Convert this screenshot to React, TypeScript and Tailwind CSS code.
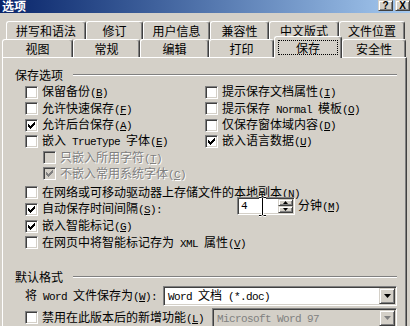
import React from 'react';

const mono = "font-['Liberation_Mono','Noto_Sans_CJK_SC',monospace] text-[11px] tracking-[-0.6px]";
const sunken =
  'border border-t-[#808080] border-l-[#808080] border-r-white border-b-white shadow-[inset_1px_1px_0_#404040,inset_-1px_-1px_0_#d4d0c8]';
const raised =
  'bg-[#d4d0c8] border border-t-[#d4d0c8] border-l-[#d4d0c8] border-r-[#404040] border-b-[#404040] shadow-[inset_1px_1px_0_#fff,inset_-1px_-1px_0_#808080]';

function M({ children }: { children: React.ReactNode }) {
  return <span className={mono}>{children}</span>;
}

// mnemonic like (B)
function Key({ k, tail = '' }: { k: string; tail?: string }) {
  return (
    <span className={mono}>
      (<span className="underline">{k}</span>){tail}
    </span>
  );
}

// classic 7x7 check glyph
const checkPixels: [number, number, number][] = [
  [6, 0, 1],
  [5, 1, 2],
  [0, 2, 1],
  [4, 2, 3],
  [0, 3, 2],
  [3, 3, 3],
  [0, 4, 5],
  [1, 5, 3],
  [2, 6, 1],
];

function Check({ on, disabled }: { on?: boolean; disabled?: boolean }) {
  return (
    <span className={`relative block w-[13px] h-[13px] shrink-0 ${sunken} ${disabled ? 'bg-[#d4d0c8]' : 'bg-white'}`}>
      {on && (
        <svg className="absolute left-[2px] top-[2px]" width="7" height="7" viewBox="0 0 7 7">
          {checkPixels.map(([x, y, w], i) => (
            <rect key={i} x={x} y={y} width={w} height={1} fill={disabled ? '#808080' : '#000'} />
          ))}
        </svg>
      )}
    </span>
  );
}

function Opt({
  on,
  disabled,
  children,
  className = '',
}: {
  on?: boolean;
  disabled?: boolean;
  children: React.ReactNode;
  className?: string;
}) {
  return (
    <div className={`flex items-center gap-[4px] ${className}`}>
      <Check on={on} disabled={disabled} />
      <span className={`whitespace-nowrap leading-none ${disabled ? 'text-[#808080] [text-shadow:1px_1px_0_#fff]' : ''}`}>
        {children}
      </span>
    </div>
  );
}

function Arrow({ disabled }: { disabled?: boolean }) {
  return (
    <div className={`w-[16px] h-[16px] shrink-0 flex items-center justify-center ${raised}`}>
      <svg width="7" height="4" viewBox="0 0 7 4">
        <path d="M0 0h7L3.5 4z" fill={disabled ? '#808080' : '#000'} />
      </svg>
    </div>
  );
}

function Select({ className, disabled, children }: { className: string; disabled?: boolean; children: React.ReactNode }) {
  return (
    <div
      className={`flex items-center h-[20px] p-[1px] pl-[4px] ${sunken} ${className} ${
        disabled ? 'bg-[#d4d0c8] text-[#808080]' : 'bg-white'
      }`}
    >
      <span className="flex-1 whitespace-nowrap leading-none">{children}</span>
      <Arrow disabled={disabled} />
    </div>
  );
}

const row1 = [
  { label: '拼写和语法', w: 'w-[80px]' },
  { label: '修订', w: 'w-[57px]' },
  { label: '用户信息', w: 'w-[67px]' },
  { label: '兼容性', w: 'w-[59px]' },
  { label: '中文版式', w: 'w-[70px]' },
  { label: '文件位置', w: 'w-[66px]' },
];

const row2 = [
  { label: '视图', w: 'w-[71px]' },
  { label: '常规', w: 'w-[67px]' },
  { label: '编辑', w: 'w-[69px]' },
  { label: '打印', w: 'w-[65px]' },
  { label: '保存', w: 'w-[68px]', active: true },
  { label: '安全性', w: 'w-[64px]' },
];

const tabBase =
  'flex items-center justify-center shrink-0 border-l border-t border-white border-r border-r-[#404040] rounded-t-[3px] shadow-[inset_-1px_0_0_#808080] bg-[#d4d0c8]';

export default function App() {
  return (
    <div className="w-[410px] h-[326px] overflow-hidden bg-[#d4d0c8] flex flex-col text-[12px] text-black font-['Noto_Sans_CJK_SC',sans-serif]">
      {/* title bar */}
      <div className="h-[13px] shrink-0 flex items-start bg-gradient-to-r from-[#0a246a] to-[#a6caf0]">
        <span className="ml-[2px] text-white font-bold leading-[12px]">选项</span>
        <div className="ml-auto flex gap-[2px]">
          <div className={`w-[15px] h-[11px] flex items-center justify-center font-bold text-[10px] leading-none ${raised}`}>
            <span className="font-['Liberation_Sans',sans-serif]">?</span>
          </div>
          <div className={`w-[15px] h-[11px] flex items-center justify-center font-bold text-[10px] leading-none ${raised}`}>
            <span className="font-['Liberation_Sans',sans-serif]">X</span>
          </div>
        </div>
      </div>

      {/* tabs */}
      <div className="mt-[8px] h-[18px] shrink-0 flex pl-[6px]">
        {row1.map((t) => (
          <div key={t.label} className={`${tabBase} ${t.w} h-[18px]`}>
            <span className="leading-none">{t.label}</span>
          </div>
        ))}
      </div>
      <div className="h-[18px] shrink-0 flex items-start pl-[2px]">
        {row2.map((t) =>
          t.active ? (
            <div key={t.label} className={`${tabBase} ${t.w} relative z-10 -mt-[3px] h-[22px] items-stretch`}>
              <div className="flex-1 m-[3px] mt-[3px] flex items-center justify-center border border-dotted border-black">
                <span className="leading-none">{t.label}</span>
              </div>
            </div>
          ) : (
            <div key={t.label} className={`${tabBase} ${t.w} h-[18px]`}>
              <span className="leading-none">{t.label}</span>
            </div>
          )
        )}
      </div>

      {/* panel */}
      <div className="ml-[2px] w-[405px] flex-1 border-l border-t border-white border-r border-r-[#404040] shadow-[inset_-1px_0_0_#808080] pl-[12px] pr-[9px] flex flex-col">
        <div className="mt-[9px] h-[16px] shrink-0 flex items-center gap-[10px]">
          <span className="leading-none">保存选项</span>
          <div className="flex-1 h-[2px] border-t border-t-[#808080] border-b border-b-white" />
        </div>

        <div className="ml-[10px] mt-[1.3px] flex flex-col">
          <div className="h-[16.3px] flex items-center">
            <Opt className="w-[180px]">
              保留备份<Key k="B" />
            </Opt>
            <Opt>
              提示保存文档属性<Key k="I" />
            </Opt>
          </div>
          <div className="h-[16.3px] flex items-center">
            <Opt className="w-[180px]">
              允许快速保存<Key k="F" />
            </Opt>
            <Opt>
              提示保存<M> Normal </M>模板<Key k="O" />
            </Opt>
          </div>
          <div className="h-[16.3px] flex items-center">
            <Opt on className="w-[180px]">
              允许后台保存<Key k="A" />
            </Opt>
            <Opt>
              仅保存窗体域内容<Key k="D" />
            </Opt>
          </div>
          <div className="h-[16.3px] flex items-center">
            <Opt className="w-[180px]">
              嵌入<M> TrueType </M>字体<Key k="E" />
            </Opt>
            <Opt on>
              嵌入语言数据<Key k="U" />
            </Opt>
          </div>
          <div className="h-[16.3px] flex items-center pl-[18px]">
            <Opt disabled>
              只嵌入所用字符<Key k="T" />
            </Opt>
          </div>
          <div className="h-[16.3px] flex items-center pl-[18px]">
            <Opt on disabled>
              不嵌入常用系统字体<Key k="C" />
            </Opt>
          </div>

          <div className="mt-[2.3px] h-[16.7px] flex items-center">
            <Opt>
              在网络或可移动驱动器上存储文件的本地副本<Key k="N" />
            </Opt>
          </div>
          <div className="h-[16.7px] flex items-center">
            <Check on />
            <span className="ml-[4px] w-[195px] shrink-0 whitespace-nowrap leading-none">
              自动保存时间间隔<Key k="S" tail=":" />
            </span>
            <div className="mb-[6px] flex items-center">
              <div className={`relative flex w-[58px] h-[18px] p-[1px] bg-white ${sunken}`}>
                <span className="flex-1 flex items-center pl-[2px] leading-none">
                  <M>4</M>
                </span>
                <div className="w-[15px] flex flex-col">
                  <div className={`h-[7px] flex items-center justify-center ${raised}`}>
                    <svg width="5" height="3" viewBox="0 0 5 3">
                      <path d="M2.5 0L5 3H0z" fill="#000" />
                    </svg>
                  </div>
                  <div className={`h-[7px] flex items-center justify-center ${raised}`}>
                    <svg width="5" height="3" viewBox="0 0 5 3">
                      <path d="M0 0h5L2.5 3z" fill="#000" />
                    </svg>
                  </div>
                </div>
                {/* I-beam mouse cursor */}
                <svg className="absolute left-[20px] -top-[2px]" width="9" height="21" viewBox="0 0 9 21">
                  <path d="M1 1.5h2.5M5.5 1.5h2.5M4.5 2v17M1 19.5h2.5M5.5 19.5h2.5" stroke="#fff" strokeWidth="3" fill="none" />
                  <path d="M1 1.5h2.5M5.5 1.5h2.5M4.5 2v17M1 19.5h2.5M5.5 19.5h2.5" stroke="#000" strokeWidth="1" fill="none" />
                </svg>
              </div>
              <span className="ml-[3px] whitespace-nowrap leading-none">
                分钟<Key k="M" />
              </span>
            </div>
          </div>
          <div className="h-[16.7px] flex items-center">
            <Opt on>
              嵌入智能标记<Key k="G" />
            </Opt>
          </div>
          <div className="h-[16.7px] flex items-center">
            <Opt>
              在网页中将智能标记存为<M> XML </M>属性<Key k="V" />
            </Opt>
          </div>
        </div>

        <div className="mt-[18px] h-[16px] shrink-0 flex items-center gap-[10px]">
          <span className="leading-none">默认格式</span>
          <div className="flex-1 h-[2px] border-t border-t-[#808080] border-b border-b-white" />
        </div>

        <div className="ml-[10px] h-[21px] shrink-0 flex items-center">
          <span className="w-[138px] shrink-0 whitespace-nowrap leading-none">
            将<M> Word </M>文件保存为<Key k="W" tail=":" />
          </span>
          <Select className="w-[235px]">
            <M>Word </M>文档<M> (*.doc)</M>
          </Select>
        </div>
        <div className="ml-[10px] mt-[1px] h-[21px] shrink-0 flex items-center">
          <Check />
          <span className="ml-[4px] w-[170px] shrink-0 whitespace-nowrap leading-none">
            禁用在此版本后的新增功能<Key k="L" />
          </span>
          <Select className="w-[186px]" disabled>
            <M>Microsoft Word 97</M>
          </Select>
        </div>
      </div>
    </div>
  );
}
